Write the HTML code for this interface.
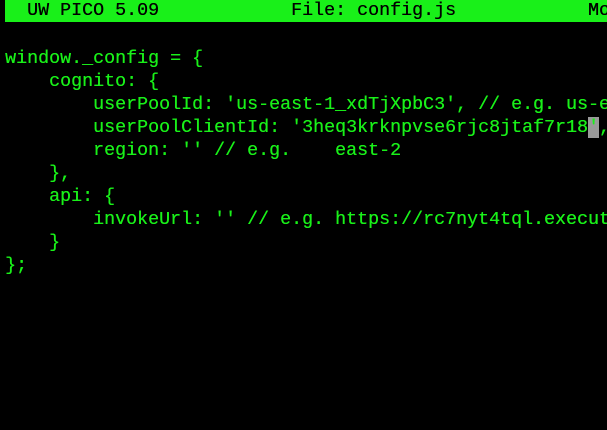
<html><head><style>
body{margin:0;background:#000;width:607px;height:430px;overflow:hidden;font-family:"Liberation Mono",monospace;font-size:18.33px;color:#19f019}
#w{position:relative;width:607px;height:430px;overflow:hidden}
.l{position:absolute;left:5px;white-space:pre;line-height:22.4px;height:22.4px;text-shadow:0.3px 0 0 #19f019}
.bar{background:#19f019;color:#000;width:602px;top:0;height:22px;line-height:22px;text-shadow:0.3px 0 0 #000}
.c{background:#9a9a9a;color:#19f019}
</style></head><body><div id="w">
<div class="l bar">  UW PICO 5.09            File: config.js            Modified</div>
<div class="l" style="top:48px">window._config = {</div>
<div class="l" style="top:71px">    cognito: {</div>
<div class="l" style="top:94px">        userPoolId: 'us-east-1_xdTjXpbC3', // e.g. us-east-2_uXboG5pAb</div>
<div class="l" style="top:117px">        userPoolClientId: '3heq3krknpvse6rjc8jtaf7r18<span class="c">'</span>, // e.g.</div>
<div class="l" style="top:140px">        region: '' // e.g.    east-2</div>
<div class="l" style="top:163px">    },</div>
<div class="l" style="top:186px">    api: {</div>
<div class="l" style="top:209px">        invokeUrl: '' // e.g. https://rc7nyt4tql.execute-api</div>
<div class="l" style="top:232px">    }</div>
<div class="l" style="top:255px">};</div>
</div></body></html>
